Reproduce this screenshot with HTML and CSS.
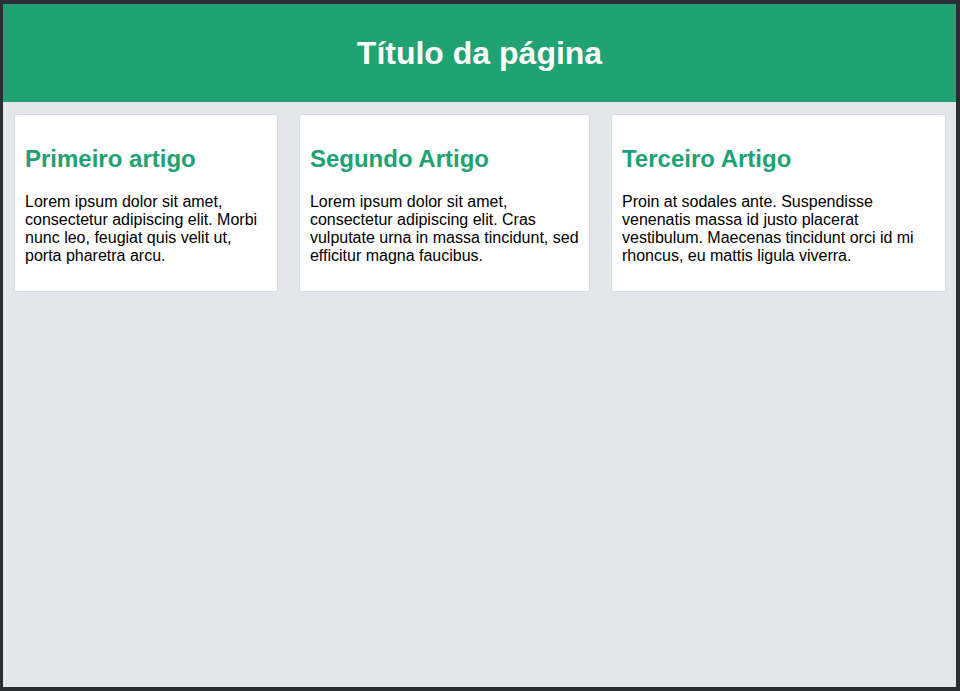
FILE: index.html
```html
<!DOCTYPE html>
<html lang="pt">
<head>
<meta charset="utf-8">
<title>Título da página</title>
<link rel="stylesheet" href="styles.css">
</head>
<body>
<div class="frame">
  <header class="page-header">
    <h1 class="page-title">Título da página</h1>
  </header>
  <main class="articles">
    <article class="card">
      <h2 class="card-title">Primeiro artigo</h2>
      <p class="card-text">Lorem ipsum dolor sit amet, consectetur adipiscing elit. Morbi nunc leo, feugiat quis velit ut, porta pharetra arcu.</p>
    </article>
    <article class="card">
      <h2 class="card-title">Segundo Artigo</h2>
      <p class="card-text">Lorem ipsum dolor sit amet, consectetur adipiscing elit. Cras vulputate urna in massa tincidunt, sed efficitur magna faucibus.</p>
    </article>
    <article class="card">
      <h2 class="card-title">Terceiro Artigo</h2>
      <p class="card-text">Proin at sodales ante. Suspendisse venenatis massa id justo placerat vestibulum. Maecenas tincidunt orci id mi rhoncus, eu mattis ligula viverra.</p>
    </article>
  </main>
</div>
</body>
</html>
```
FILE: styles.css
```css
* { box-sizing: border-box; }
html, body {
  margin: 0;
  padding: 0;
  height: 100%;
}
body {
  font-family: "Liberation Sans", Arial, sans-serif;
  background: #2b2d35;
}
.frame {
  height: 691px;
  border-style: solid;
  border-color: #2b2d35;
  border-width: 4px 4px 4px 3px;
  background: #e3e6ea;
  display: flex;
  flex-direction: column;
}
.page-header {
  background: #20a272;
  height: 98px;
  display: flex;
  align-items: center;
  justify-content: center;
}
.page-title {
  margin: 0;
  color: #fff;
  font-size: 32px;
  font-weight: bold;
}
.articles {
  display: flex;
  align-items: flex-start;
  gap: 21px;
  padding: 12px 10px 0 11px;
}
.card {
  background: #fff;
  border: 1px solid #d9dcdf;
  border-radius: 3px;
  padding: 10px;
}
.card-title {
  color: #20a272;
  font-size: 24px;
  font-weight: bold;
  margin: 20px 0;
}
.card-text {
  margin: 16px 0;
  font-size: 16px;
  color: #000;
}
```
